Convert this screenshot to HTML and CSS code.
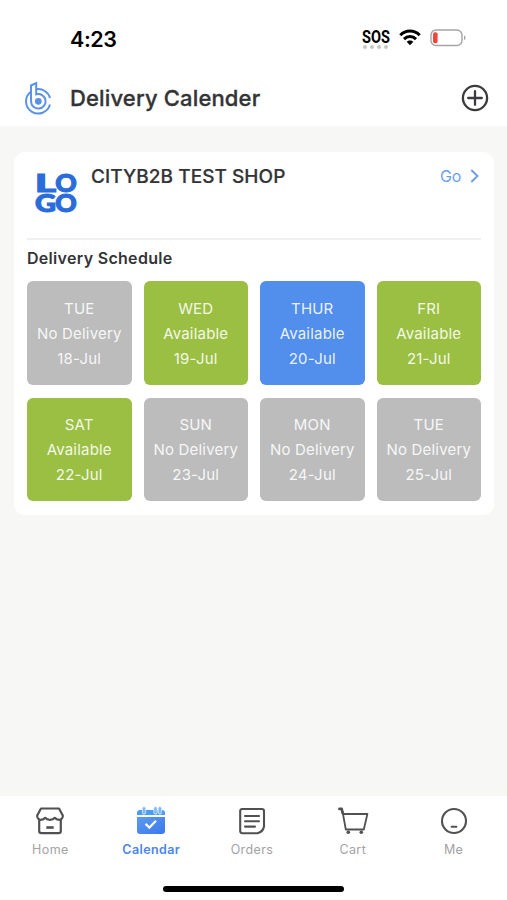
FILE: index.html
```html
<!DOCTYPE html>
<html lang="en">
<head>
    <meta charset="UTF-8">
    <meta name="viewport" content="width=device-width, initial-scale=1.0">
    <title>Delivery Calender</title>
    <link rel="stylesheet" href="styles.css">
</head>
<body>

<div class="status-bar">
    <span class="time">4:23</span>
    <div class="status-icons">
        <div class="sos">
            <svg width="28" height="19" viewBox="0 0 28 19">
                <text x="0" y="17" textLength="28" lengthAdjust="spacingAndGlyphs">SOS</text>
            </svg>
            <div class="dots"><i></i><i></i><i></i><i></i></div>
        </div>
        <svg class="wifi" width="22" height="17" viewBox="0 0 22 17" fill="none" stroke="#000" stroke-width="3">
            <path d="M1.3 6.2C6.7 .7 15.3 .7 20.7 6.2"/>
            <path d="M5 10.1C8.4 6.7 13.6 6.7 17 10.1"/>
            <path d="M7.7 12.8C9.6 10.9 12.4 10.9 14.3 12.8L11 16.2Z" fill="#000" stroke="none"/>
        </svg>
        <svg class="battery" width="37" height="18" viewBox="0 0 37 18">
            <rect x="1" y="1" width="31" height="15.5" rx="5" fill="#fff" stroke="#a5a5a5" stroke-width="1.4"/>
            <rect x="3" y="3.3" width="4.6" height="11" rx="2" fill="#f0463c"/>
            <path d="M34 6.5C36 7.2 36 10.3 34 11Z" fill="#a5a5a5"/>
        </svg>
    </div>
</div>

<header class="header">
    <svg class="brand" width="29" height="34" viewBox="0 0 29 34" fill="none" stroke="#5b92e8" stroke-width="2">
        <path d="M13.2 8.3A12.2 12.2 0 0 1 27 17"/>
        <path d="M27 23.6A12.2 12.2 0 1 1 7.5 10.9"/>
        <path d="M8 20.3V4.5L13.2 2V13.3A7.3 7.3 0 1 1 8 20.3"/>
        <circle cx="15.3" cy="20.3" r="3.4" fill="#5b92e8" stroke="none"/>
    </svg>
    <h1>Delivery Calender</h1>
    <svg class="add" width="28" height="28" viewBox="0 0 28 28" fill="none" stroke="#3b3b3d" stroke-width="2.3">
        <circle cx="14" cy="14" r="12.1"/>
        <path d="M7.2 14H20.8M14 7.2V20.8" stroke-linecap="round"/>
    </svg>
</header>

<main class="content">
    <section class="card">
        <div class="shop">
            <svg class="shop-logo" width="42" height="62" viewBox="0 0 42 62">
                <text x="0" y="28.8" textLength="21" lengthAdjust="spacingAndGlyphs">L</text>
                <text x="20.3" y="28.8" textLength="21.5" lengthAdjust="spacingAndGlyphs">O</text>
                <text x="0" y="49.4" textLength="21" lengthAdjust="spacingAndGlyphs">G</text>
                <text x="20.3" y="49.4" textLength="21.5" lengthAdjust="spacingAndGlyphs">O</text>
            </svg>
            <h2>CITYB2B TEST SHOP</h2>
            <a class="go" href="#">Go
                <svg width="9" height="14" viewBox="0 0 9 14" fill="none" stroke="#6d9fe8" stroke-width="1.9"><path d="M1.3 1L7.5 7L1.3 13"/></svg>
            </a>
        </div>
        <h3>Delivery Schedule</h3>
        <div class="days">
            <div class="day"><span>TUE</span><span>No Delivery</span><span>18-Jul</span></div>
            <div class="day available"><span>WED</span><span>Available</span><span>19-Jul</span></div>
            <div class="day selected"><span>THUR</span><span>Available</span><span>20-Jul</span></div>
            <div class="day available"><span>FRI</span><span>Available</span><span>21-Jul</span></div>
            <div class="day available"><span>SAT</span><span>Available</span><span>22-Jul</span></div>
            <div class="day"><span>SUN</span><span>No Delivery</span><span>23-Jul</span></div>
            <div class="day"><span>MON</span><span>No Delivery</span><span>24-Jul</span></div>
            <div class="day"><span>TUE</span><span>No Delivery</span><span>25-Jul</span></div>
        </div>
    </section>
</main>

<footer class="footer">
    <nav class="tabs">
        <a class="tab" href="#">
            <svg width="30" height="30" viewBox="0 0 30 30" fill="none" stroke="#515153" stroke-width="2.2" stroke-linejoin="round">
                <path d="M6 2.5H24L27.8 9.5C28.2 12 26.2 13.8 24.2 13.8C22 13.8 20.6 12.8 19.8 11.8C18.8 13 17 13.8 15 13.8C13 13.8 11.2 13 10.2 11.8C9.4 12.8 8 13.8 5.8 13.8C3.8 13.8 1.8 12 2.2 9.5Z"/>
                <path d="M4.2 13.8V25Q4.2 27.2 6.4 27.2H23.6Q25.8 27.2 25.8 25V13.8"/>
                <path d="M11.3 21.5H18.7" stroke-width="2.6"/>
            </svg>
            <span>Home</span>
        </a>
        <a class="tab active" href="#">
            <svg width="30" height="30" viewBox="0 0 30 30">
                <defs>
                    <linearGradient id="calendarFill" x1="0" y1="0" x2="1" y2="1">
                        <stop offset="0" stop-color="#5d9bf0"/>
                        <stop offset="1" stop-color="#3a78ec"/>
                    </linearGradient>
                </defs>
                <path d="M1 9V7Q1 4 4 4H26Q29 4 29 7V9Z" fill="#4c9bf3"/>
                <path d="M1 11H29V25Q29 28 26 28H4Q1 28 1 25Z" fill="url(#calendarFill)"/>
                <g fill="#7db8f7" stroke="#fff" stroke-width=".6">
                    <rect x="6.3" y=".6" width="3.4" height="7.6" rx="1.7"/>
                    <rect x="17.8" y=".6" width="3.4" height="7.6" rx="1.7"/>
                    <rect x="22.2" y=".6" width="3.4" height="7.6" rx="1.7"/>
                </g>
                <path d="M9.5 17.8L13.3 21.6L20 14.8" fill="none" stroke="#fff" stroke-width="2.2"/>
            </svg>
            <span>Calendar</span>
        </a>
        <a class="tab" href="#">
            <svg width="30" height="30" viewBox="0 0 30 30" fill="none" stroke="#515153" stroke-width="2.1" stroke-linejoin="round">
                <path d="M5.2 3H24.8Q27 3 27 5.2V20.5Q26 26 20.5 27.2H5.2Q3.2 27.2 3.2 25V5.2Q3.2 3 5.2 3Z"/>
                <path d="M8 10H22M8 15.2H22M8 20.6H18" stroke-linecap="round"/>
            </svg>
            <span>Orders</span>
        </a>
        <a class="tab" href="#">
            <svg width="32" height="30" viewBox="0 0 32 30" fill="none" stroke="#515153" stroke-width="1.8" stroke-linejoin="round">
                <path d="M2 2.9H4.7L6 8L8.8 23.5H26.8L30.4 8H6"/>
                <path d="M2.4 2.9H4.7L5.8 7.5" stroke-width="2.6" stroke-linecap="round"/>
                <circle cx="11.3" cy="26.3" r="1.8" fill="#515153" stroke="none"/>
                <circle cx="24.3" cy="26.3" r="1.8" fill="#515153" stroke="none"/>
            </svg>
            <span>Cart</span>
        </a>
        <a class="tab" href="#">
            <svg width="30" height="30" viewBox="0 0 30 30" fill="none" stroke="#515153" stroke-width="2.1">
                <circle cx="15" cy="15" r="12"/>
                <path d="M12.6 20.8H17.4" stroke-linecap="round"/>
            </svg>
            <span>Me</span>
        </a>
    </nav>
    <div class="home-indicator"></div>
</footer>

</body>
</html>
```
FILE: styles.css
```css
* {
    box-sizing: border-box;
}
body {
    font-family: Inter, Roboto, sans-serif;
    background-color: #f7f7f5;
    color: #343436;
    display: flex;
    flex-direction: column;
    height: 100vh;
    margin: 0;
}
svg {
    display: block;
}
a {
    text-decoration: none;
}
h1, h2, h3 {
    margin: 0;
}
.status-bar {
    display: flex;
    justify-content: space-between;
    height: 70px;
    padding: 26px 40px 0 70px;
    background-color: #fff;
}
.time {
    font-size: 21.5px;
    line-height: 26px;
    font-weight: 600;
    letter-spacing: -0.4px;
    color: #000;
}
.status-icons {
    display: flex;
    align-items: flex-start;
}
.sos {
    width: 28px;
    margin-right: 9px;
    font-family: Roboto, sans-serif;
    font-size: 18.5px;
    font-weight: 700;
}
.sos svg {
    overflow: visible;
}
.dots {
    display: flex;
    gap: 3px;
    padding-left: 1px;
}
.dots i {
    width: 4px;
    height: 4px;
    border-radius: 50%;
    background-color: #c6c6c6;
}
.wifi {
    margin: 3px 9px 0 0;
}
.battery {
    margin-top: 3px;
}
.header {
    display: flex;
    align-items: center;
    height: 56px;
    padding: 0 18px 0 23px;
    background-color: #fff;
}
.header h1 {
    flex: 1;
    margin-left: 18px;
    font-size: 22px;
    font-weight: 500;
    letter-spacing: 0.15px;
    -webkit-text-stroke: 0.3px #343436;
}
.content {
    flex: 1;
    padding: 26px 13px 0 14px;
}
.card {
    height: 363px;
    padding: 0 13px;
    border-radius: 11px;
    background-color: #fff;
}
.shop {
    display: flex;
    align-items: flex-start;
    height: 88px;
    padding-left: 8px;
    border-bottom: 2px solid #efefef;
}
.shop-logo {
    margin: 11px 14px 0 0;
    overflow: visible;
    font-family: Lato, Inter, sans-serif;
    font-size: 24px;
    font-weight: 900;
    fill: #2b6cdb;
    stroke: #2b6cdb;
    stroke-width: 1.1px;
}
.shop h2 {
    flex: 1;
    margin-top: 13px;
    font-size: 19px;
    line-height: 24px;
    font-weight: 500;
    letter-spacing: 0.05px;
    -webkit-text-stroke: 0.2px #343436;
}
.go {
    display: flex;
    align-items: center;
    gap: 9px;
    margin: 14px 2px 0 0;
    font-size: 16px;
    line-height: 20px;
    letter-spacing: -0.3px;
    color: #6d9fe8;
}
.card h3 {
    padding: 8px 0 12px;
    font-size: 16px;
    line-height: 21px;
    font-weight: 600;
    letter-spacing: 0.3px;
}
.days {
    display: grid;
    grid-template-columns: repeat(4, 1fr);
    gap: 13px 12px;
}
.day {
    display: flex;
    flex-direction: column;
    align-items: center;
    height: 103.5px;
    padding-top: 14.5px;
    border-radius: 6px;
    background-color: #bcbcbc;
    color: rgba(255, 255, 255, 0.9);
    font-size: 15px;
    line-height: 25px;
    letter-spacing: 0.2px;
    white-space: nowrap;
}
.day.available {
    background-color: #9bbf43;
}
.day.selected {
    background-color: #528eec;
}
.footer {
    display: flex;
    flex-direction: column;
    align-items: center;
    height: 104px;
    background-color: #fff;
}
.tabs {
    display: flex;
    width: 100%;
    height: 90px;
    padding: 10px 3px 0 0;
}
.tab {
    display: flex;
    flex: 1;
    flex-direction: column;
    align-items: center;
    gap: 6px;
    font-size: 12.5px;
    line-height: 16px;
    letter-spacing: 0.4px;
    color: #a3a3a5;
}
.tab.active {
    font-weight: 600;
    color: #4a86ee;
}
.home-indicator {
    width: 181px;
    height: 6px;
    border-radius: 3px;
    background-color: #000;
}
```
